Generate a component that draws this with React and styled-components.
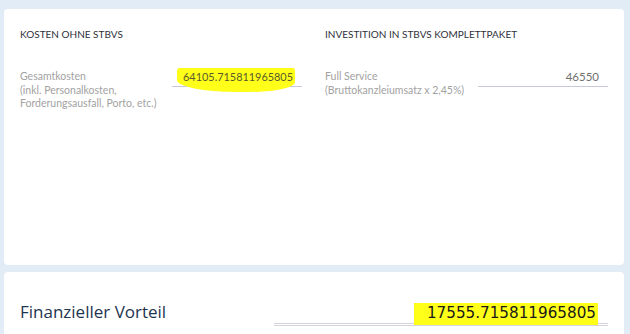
import React from 'react'
import styled, { createGlobalStyle } from 'styled-components'

const Global = createGlobalStyle`
  body {
    margin: 0;
    background: #e1ecf6;
    font-family: 'Lato', 'Open Sans', sans-serif;
  }
`

const Page = styled.div`
  display: flex;
  flex-direction: column;
  gap: 7px;
  padding: 9px 6px 0 4px;
  height: 334px;
  box-sizing: border-box;
  overflow: hidden;
`

const Card = styled.div`
  background: #fff;
  border-radius: 4px;
  padding: 16px;
  height: ${p => p.h || 'auto'};
  box-sizing: border-box;
  flex-shrink: 0;
`

const Columns = styled.div`
  display: grid;
  grid-template-columns: 282px 283px;
  column-gap: 23px;
`

const Column = styled.div`
  display: flex;
  flex-direction: column;
`

const Heading = styled.h3`
  margin: 3px 0 30px;
  font-size: 10px;
  font-weight: 400;
  color: #2f2f3a;
`

const Row = styled.div`
  display: flex;
  justify-content: space-between;
  align-items: flex-start;
`

const Label = styled.div`
  font-size: 10.5px;
  line-height: 13.5px;
  color: #a2a2a2;
  max-width: 150px;
`

const Input = styled.div`
  width: 130px;
  box-sizing: border-box;
  border-bottom: 1px solid #c9c9dc;
  text-align: right;
  padding: 0 9px 3px 0;
  font-size: 11.5px;
  color: #6f6f6f;
`

const MarkerWrap = styled.span`
  position: relative;
  z-index: 0;
`

const Marker = styled.span`
  position: relative;
  font-size: 10.9px;
  color: #5a5a2a;
  &::before {
    content: '';
    position: absolute;
    left: -6px;
    right: -2px;
    top: -2px;
    bottom: -9px;
    background: #ffff1a;
    border-radius: 3px 2px 40% 50%;
    z-index: -1;
  }
`

const TotalRow = styled.div`
  display: flex;
  justify-content: space-between;
  align-items: flex-end;
  margin-top: 12px;
`

const TotalLabel = styled.div`
  font-family: 'Open Sans', sans-serif;
  font-size: 17px;
  color: #1e3550;
`

const TotalValue = styled.div`
  width: 334px;
  box-sizing: border-box;
  text-align: right;
  border-bottom: 3px double #d3d3de;
  padding: 0 10px 1px 0;
  margin-bottom: -3px;
`

const Highlight = styled.span`
  background: #ffff1a;
  padding: 1px 2px 3px 13px;
  font-family: 'DejaVu Sans', sans-serif;
  font-size: 15.2px;
  color: #1a1a1a;
`

export default function App() {
  return (
    <>
      <Global />
      <Page>
        <Card h="256px">
          <Columns>
            <Column>
              <Heading>KOSTEN OHNE STBVS</Heading>
              <Row>
                <Label>
                  Gesamtkosten
                  <br />
                  (inkl. Personalkosten, Forderungsausfall, Porto, etc.)
                </Label>
                <Input>
                  <MarkerWrap>
                    <Marker>64105.715811965805</Marker>
                  </MarkerWrap>
                </Input>
              </Row>
            </Column>
            <Column>
              <Heading>INVESTITION IN STBVS KOMPLETTPAKET</Heading>
              <Row>
                <Label>
                  Full Service
                  <br />
                  (Bruttokanzleiumsatz x 2,45%)
                </Label>
                <Input>46550</Input>
              </Row>
            </Column>
          </Columns>
        </Card>
        <Card h="90px">
          <TotalRow>
            <TotalLabel>Finanzieller Vorteil</TotalLabel>
            <TotalValue>
              <Highlight>17555.715811965805</Highlight>
            </TotalValue>
          </TotalRow>
        </Card>
      </Page>
    </>
  )
}
